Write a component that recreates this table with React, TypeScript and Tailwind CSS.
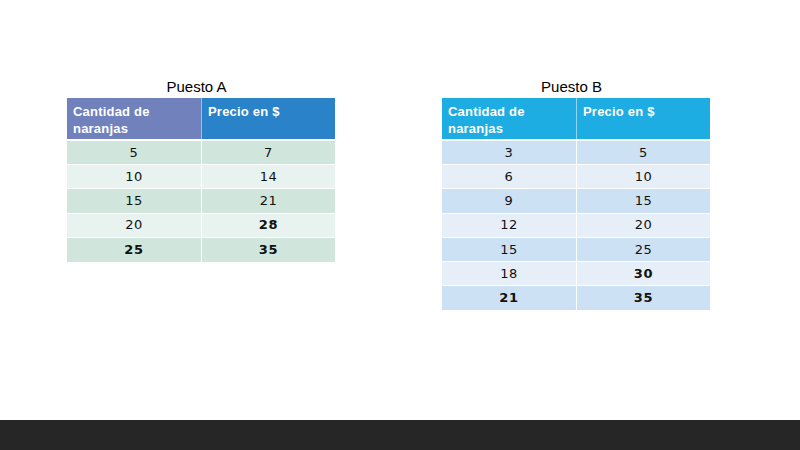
import React from "react";

type Cell = { v: string; b?: boolean };

const tableA: [Cell, Cell][] = [
  [{ v: "5" }, { v: "7" }],
  [{ v: "10" }, { v: "14" }],
  [{ v: "15" }, { v: "21" }],
  [{ v: "20" }, { v: "28", b: true }],
  [{ v: "25", b: true }, { v: "35", b: true }],
];

const tableB: [Cell, Cell][] = [
  [{ v: "3" }, { v: "5" }],
  [{ v: "6" }, { v: "10" }],
  [{ v: "9" }, { v: "15" }],
  [{ v: "12" }, { v: "20" }],
  [{ v: "15" }, { v: "25" }],
  [{ v: "18" }, { v: "30", b: true }],
  [{ v: "21", b: true }, { v: "35", b: true }],
];

function Table({
  title,
  rows,
  h1,
  h2,
  dark,
  light,
}: {
  title: string;
  rows: [Cell, Cell][];
  h1: string;
  h2: string;
  dark: string;
  light: string;
}) {
  return (
    <div className="w-[268px] flex flex-col">
      <div
        className="h-[21px] pr-[9px] text-center text-[15px] leading-[19px] text-black"
        style={{ fontFamily: '"Liberation Sans", Arial, sans-serif' }}
      >
        {title}
      </div>
      <div className="flex flex-col">
        <div
          className="grid grid-cols-2 h-[43px] border-b-2 border-white"
          style={{ fontFamily: '"Liberation Sans", Arial, sans-serif' }}
        >
          <div
            className={`${h1} pl-[6px] pt-[5px] text-[13px] leading-[17px] font-bold text-white tracking-[0.2px]`}
          >
            Cantidad de
            <br />
            naranjas
          </div>
          <div
            className={`${h2} border-l border-white/50 pl-[6px] pt-[5px] text-[13px] leading-[17px] font-bold text-white tracking-[0.2px]`}
          >
            Precio en $
          </div>
        </div>
        {rows.map((r, i) => (
          <div
            key={i}
            className={`grid grid-cols-2 h-[24.2px] ${
              i < rows.length - 1 ? "border-b border-white" : ""
            } ${i % 2 === 0 ? dark : light}`}
            style={{ fontFamily: '"DejaVu Sans", sans-serif' }}
          >
            <div
              className={`flex items-center justify-center text-[13px] text-[#111] tracking-[0.6px] ${
                r[0].b ? "font-bold" : ""
              }`}
            >
              {r[0].v}
            </div>
            <div
              className={`flex items-center justify-center border-l border-white text-[13px] text-[#111] tracking-[0.6px] ${
                r[1].b ? "font-bold" : ""
              }`}
            >
              {r[1].v}
            </div>
          </div>
        ))}
      </div>
    </div>
  );
}

export default function App() {
  return (
    <div className="w-[800px] h-[450px] flex flex-col bg-white">
      <div className="h-[420px] flex items-start pl-[67px] pt-[77px] gap-[107px]">
        <Table
          title="Puesto A"
          rows={tableA}
          h1="bg-[#7181bb]"
          h2="bg-[#2a82c9]"
          dark="bg-[#d0e6dd]"
          light="bg-[#e8f2ee]"
        />
        <Table
          title="Puesto B"
          rows={tableB}
          h1="bg-[#1eade3]"
          h2="bg-[#1eade3]"
          dark="bg-[#cce1f3]"
          light="bg-[#e6eff8]"
        />
      </div>
      <div className="h-[30px] bg-[#262626]" />
    </div>
  );
}
